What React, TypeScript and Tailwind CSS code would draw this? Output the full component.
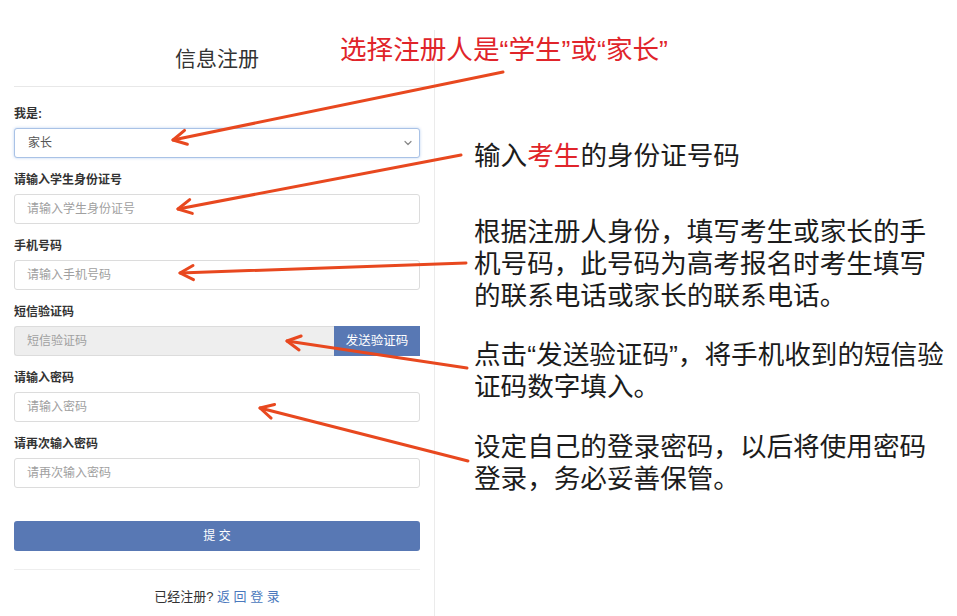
import React from "react";

const arrows: [number, number, number, number][] = [
  [503, 72, 173, 140],
  [461, 155, 178, 209],
  [466, 263, 180, 273],
  [467, 368, 287, 341],
  [468, 461, 260, 408],
];

function headPath(tx: number, ty: number, hx: number, hy: number) {
  const dx = hx - tx;
  const dy = hy - ty;
  const len = Math.hypot(dx, dy);
  const ux = dx / len;
  const uy = dy / len;
  const L = 15;
  const t = (28 * Math.PI) / 180;
  const c = Math.cos(t);
  const s = Math.sin(t);
  const r1x = ux * c - uy * s;
  const r1y = ux * s + uy * c;
  const r2x = ux * c + uy * s;
  const r2y = -ux * s + uy * c;
  return `M ${hx - L * r1x} ${hy - L * r1y} L ${hx} ${hy} L ${hx - L * r2x} ${hy - L * r2y}`;
}

function Field({ label, placeholder, first }: { label: string; placeholder: string; first?: boolean }) {
  return (
    <div className={first ? "" : "mt-[14px]"}>
      <div className="text-[12px] font-bold text-[#333] leading-[17px] mb-[5px]">{label}</div>
      <div className="h-[30px] border border-[#dcdcdc] rounded-[3px] bg-white flex items-center pl-[12px] text-[12px] text-[#a0a0a0]">
        {placeholder}
      </div>
    </div>
  );
}

export default function App() {
  const font = { fontFamily: '"Liberation Sans", "Noto Sans CJK SC", sans-serif' };
  return (
    <div className="relative w-[957px] h-[616px] bg-white overflow-hidden flex" style={font}>
      {/* Left panel */}
      <div className="w-[435px] flex-none pt-[30px] h-full">
        <div className="h-full border-r border-[#ebebeb] pl-[14px]">
          <div className="h-[57px] border-b border-[#e8e8e8] flex items-center">
            <div className="w-[406px] text-center text-[21px] text-[#333] pt-[2px]">信息注册</div>
          </div>
          <div className="w-[406px] pt-[19px]">
            <div>
              <div className="text-[12px] font-bold text-[#333] leading-[17px] mb-[5px]">我是:</div>
              <div className="h-[30px] border border-[#a9c2e6] rounded-[3px] bg-white flex items-center justify-between pl-[13px] pr-[6px] text-[12px] text-[#555] shadow-[0_0_3px_rgba(102,153,224,0.45)]">
                <span>家长</span>
                <svg width="10" height="10" viewBox="0 0 10 10" fill="none">
                  <path d="M2 3.5 L5 6.5 L8 3.5" stroke="#888" strokeWidth="1.2" strokeLinecap="round" strokeLinejoin="round" />
                </svg>
              </div>
            </div>
            <Field label="请输入学生身份证号" placeholder="请输入学生身份证号" />
            <Field label="手机号码" placeholder="请输入手机号码" />
            <div className="mt-[14px]">
              <div className="text-[12px] font-bold text-[#333] leading-[17px] mb-[5px]">短信验证码</div>
              <div className="h-[30px] flex">
                <div className="flex-1 border border-[#dcdcdc] border-r-0 rounded-l-[3px] bg-[#eeeeee] flex items-center pl-[12px] text-[12px] text-[#a0a0a0]">
                  短信验证码
                </div>
                <div className="w-[86px] bg-[#5878b4] flex items-center justify-center text-[12.5px] text-white">
                  发送验证码
                </div>
              </div>
            </div>
            <Field label="请输入密码" placeholder="请输入密码" />
            <Field label="请再次输入密码" placeholder="请再次输入密码" />
            <div className="mt-[33px] h-[30px] rounded-[3px] bg-[#5878b4] flex items-center justify-center text-[12px] text-white">
              提 交
            </div>
            <div className="mt-[18px] border-t border-[#eeeeee]" />
            <div className="mt-[18px] text-center text-[13px] leading-[18px] text-[#333]">
              已经注册? <span className="text-[#4a78bd]">返 回 登 录</span>
            </div>
          </div>
        </div>
      </div>

      {/* Right annotations */}
      <div className="flex-1 pl-[39px] pt-[140px] text-[26.6px] leading-[32px] text-[#1c1c1c]">
        <div>
          输入<span className="text-[#e0242a]">考生</span>的身份证号码
        </div>
        <div className="mt-[44px]">
          <div>根据注册人身份，填写考生或家长的手</div>
          <div>机号码，此号码为高考报名时考生填写</div>
          <div>的联系电话或家长的联系电话。</div>
        </div>
        <div className="mt-[27px]">
          <div>点击“发送验证码”，将手机收到的短信验</div>
          <div>证码数字填入。</div>
        </div>
        <div className="mt-[28px]">
          <div>设定自己的登录密码，以后将使用密码</div>
          <div>登录，务必妥善保管。</div>
        </div>
      </div>

      {/* Overlay: red heading */}
      <div className="absolute left-[340px] top-[34px] text-[26.6px] leading-[32px] text-[#e0242a] whitespace-nowrap">
        选择注册人是“学生”或“家长”
      </div>

      {/* Overlay: arrows */}
      <svg className="absolute left-0 top-0 pointer-events-none" width="957" height="616" viewBox="0 0 957 616">
        {arrows.map(([tx, ty, hx, hy], i) => (
          <g key={i} stroke="#e8481f" strokeWidth="3" fill="none" strokeLinecap="round" strokeLinejoin="round">
            <line x1={tx} y1={ty} x2={hx} y2={hy} />
            <path d={headPath(tx, ty, hx, hy)} />
          </g>
        ))}
      </svg>
    </div>
  );
}
